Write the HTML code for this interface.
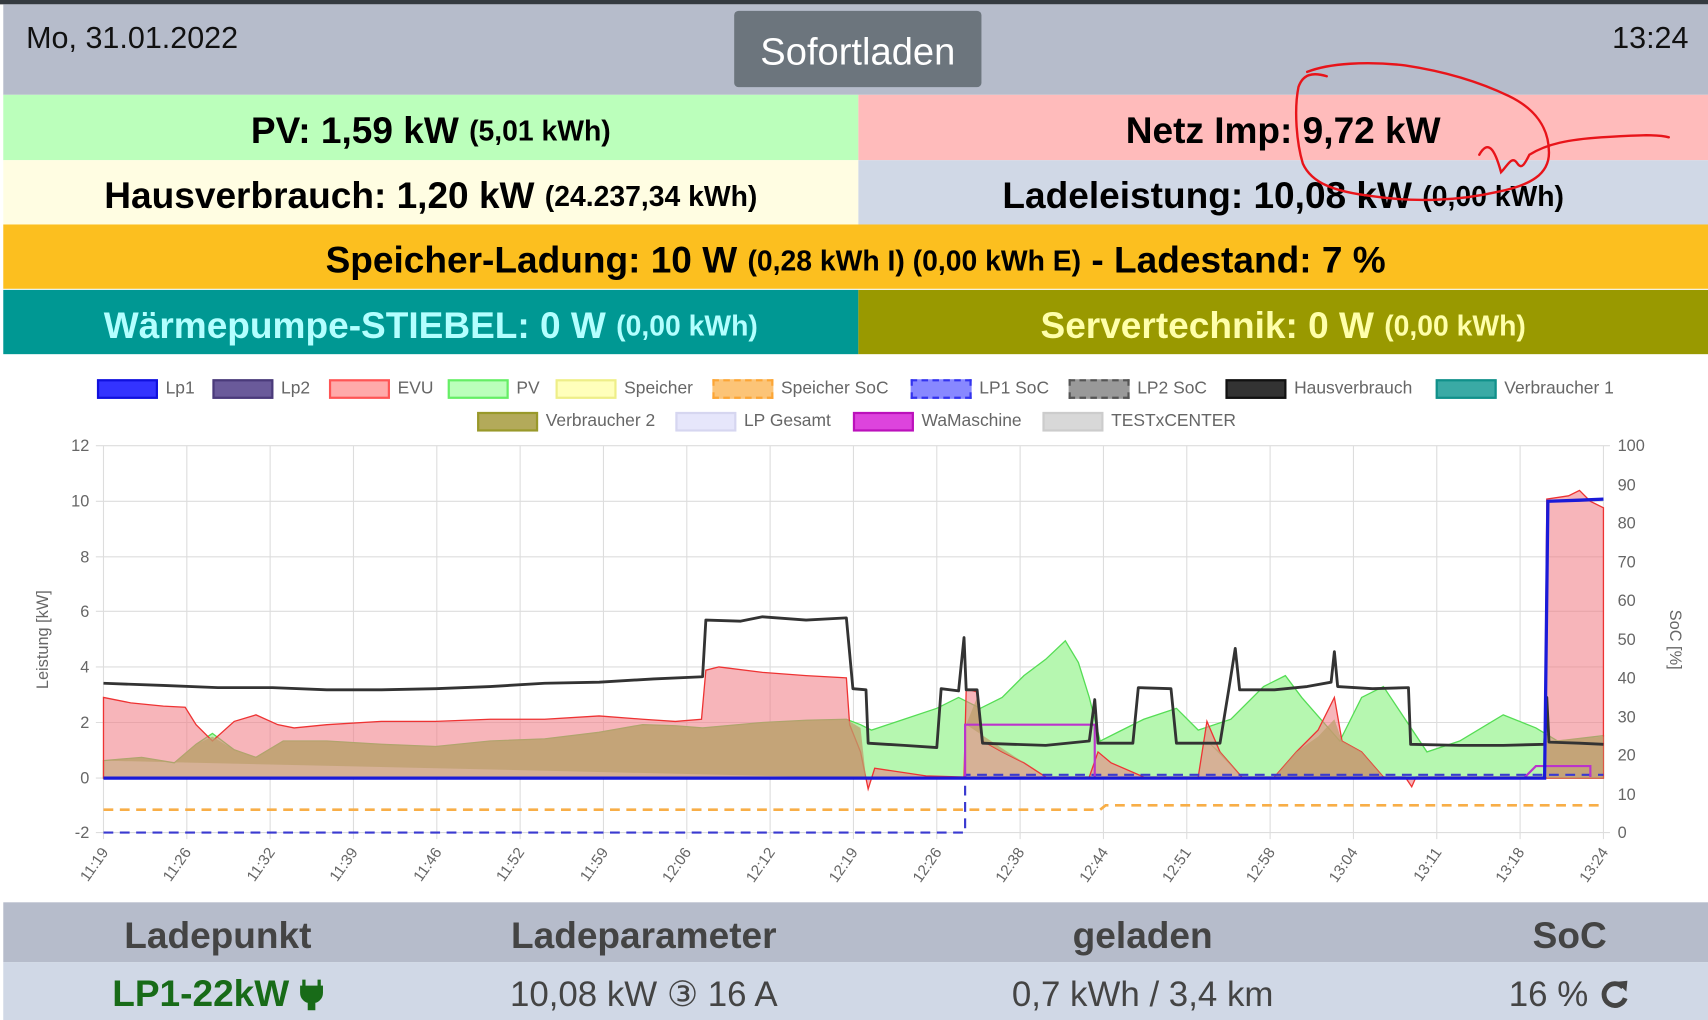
<!DOCTYPE html>
<html><head><meta charset="utf-8"><style>
*{margin:0;padding:0;box-sizing:border-box}
html,body{width:1708px;height:1020px;overflow:hidden;background:#fff}
#w{position:absolute;left:0;top:0;width:1568px;height:936px;transform-origin:0 0;transform:scale(1.08929,1.08974);font-family:"Liberation Sans",sans-serif}
.abs{position:absolute}
.row{position:absolute;display:flex;align-items:center;justify-content:center;font-weight:bold;font-size:34px;white-space:nowrap;padding-top:7px}
.row small{font-size:26px}
.lg{position:absolute;font-size:16px;color:#666}
.lg i{position:absolute;width:56px;height:18px;border:2px solid;top:0}
.lg span{position:absolute;top:0;white-space:nowrap}
.th{position:absolute;top:828px;height:55px;font-size:34px;font-weight:bold;color:#444;display:flex;align-items:center;justify-content:center;padding-top:7px}
.td{position:absolute;top:883px;height:53px;font-size:32px;color:#444;display:flex;align-items:center;justify-content:center;white-space:nowrap;padding-top:5px}
</style></head><body><div id="w">
<div class="abs" style="left:0;top:0;width:1568px;height:4px;background:#343a40"></div>
<div class="abs" style="left:3px;top:4px;width:1565px;height:83px;background:#b6bccb"></div>
<div class="abs" style="left:24px;top:19px;font-size:28px;color:#111">Mo, 31.01.2022</div>
<div class="abs" style="left:1480px;top:19px;font-size:28px;color:#111">13:24</div>
<div class="abs" style="left:674px;top:10px;width:227px;height:70px;background:#6c757d;border-radius:4px;color:#fff;font-size:35px;display:flex;align-items:center;justify-content:center;padding-top:5px">Sofortladen</div>

<div class="row" style="left:3px;top:87px;width:785px;height:60px;background:#bbffbb">PV: 1,59 kW&nbsp;<small>(5,01 kWh)</small></div>
<div class="row" style="left:788px;top:87px;width:780px;height:60px;background:#ffbbbb">Netz Imp: 9,72 kW</div>
<div class="row" style="left:3px;top:147px;width:785px;height:59px;background:#fffde2">Hausverbrauch: 1,20 kW&nbsp;<small>(24.237,34 kWh)</small></div>
<div class="row" style="left:788px;top:147px;width:780px;height:59px;background:#d0d8e6">Ladeleistung: 10,08 kW&nbsp;<small>(0,00 kWh)</small></div>
<div class="row" style="left:3px;top:206px;width:1565px;height:59px;background:#fcbf1f">Speicher-Ladung: 10 W&nbsp;<small>(0,28 kWh I) (0,00 kWh E)</small>&nbsp;- Ladestand: 7 %</div>
<div class="row" style="left:3px;top:266px;width:785px;height:59px;background:#009893;color:#b3ffff">Wärmepumpe-STIEBEL: 0 W&nbsp;<small>(0,00 kWh)</small></div>
<div class="row" style="left:788px;top:266px;width:780px;height:59px;background:#999900;color:#ffffaa">Servertechnik: 0 W&nbsp;<small>(0,00 kWh)</small></div>

<!-- red annotation -->
<svg class="abs" style="left:0;top:0" width="1568" height="330"><g fill="none" stroke="#e8141a" stroke-width="2.2" stroke-linecap="round">
<path d="M1218,70 C1205,66 1196,68 1192,80 C1188,100 1190,130 1196,150 C1204,168 1225,176 1260,180 C1300,186 1340,184 1375,176 C1405,170 1422,160 1422,140 C1422,118 1410,100 1385,88 C1360,76 1330,66 1290,60 C1255,56 1220,58 1200,66"/>
<path d="M1358,142 C1366,128 1372,136 1378,158 C1384,152 1388,142 1393,150 C1397,156 1400,150 1404,142 C1420,132 1440,128 1470,126 C1500,124 1522,123 1532,126"/>
</g></svg>

<!-- legend -->
<div class="lg" style="left:89px;top:348px"><i style="left:0;background:rgba(0,0,255,.8);border-color:#1010dd"></i><span style="left:63px">Lp1</span></div>
<div class="lg" style="left:195px;top:348px"><i style="left:0;background:#6a5a9a;border-color:#4a3a7a"></i><span style="left:63px">Lp2</span></div>
<div class="lg" style="left:302px;top:348px"><i style="left:0;background:#ffaaaa;border-color:#ff5555"></i><span style="left:63px">EVU</span></div>
<div class="lg" style="left:411px;top:348px"><i style="left:0;background:#bbffbb;border-color:#66ee66"></i><span style="left:63px">PV</span></div>
<div class="lg" style="left:510px;top:348px"><i style="left:0;background:#ffffbb;border-color:#eeee88"></i><span style="left:63px">Speicher</span></div>
<div class="lg" style="left:654px;top:348px"><i style="left:0;background:#fcc477;border-color:#fca535;border-style:dashed"></i><span style="left:63px">Speicher SoC</span></div>
<div class="lg" style="left:836px;top:348px"><i style="left:0;background:#8888ff;border-color:#3333ee;border-style:dashed"></i><span style="left:63px">LP1 SoC</span></div>
<div class="lg" style="left:981px;top:348px"><i style="left:0;background:#999;border-color:#555;border-style:dashed"></i><span style="left:63px">LP2 SoC</span></div>
<div class="lg" style="left:1125px;top:348px"><i style="left:0;background:#333;border-color:#111"></i><span style="left:63px">Hausverbrauch</span></div>
<div class="lg" style="left:1318px;top:348px"><i style="left:0;background:#3aaaa5;border-color:#11908a"></i><span style="left:63px">Verbraucher 1</span></div>
<div class="lg" style="left:438px;top:378px"><i style="left:0;background:#b3aa5a;border-color:#99992a"></i><span style="left:63px">Verbraucher 2</span></div>
<div class="lg" style="left:620px;top:378px"><i style="left:0;background:#e6e6fb;border-color:#d6d6f0"></i><span style="left:63px">LP Gesamt</span></div>
<div class="lg" style="left:783px;top:378px"><i style="left:0;background:#dd44dd;border-color:#bb11bb"></i><span style="left:63px">WaMaschine</span></div>
<div class="lg" style="left:957px;top:378px"><i style="left:0;background:#d8d8d8;border-color:#ccc"></i><span style="left:63px">TESTxCENTER</span></div>

<svg class="abs" style="left:0;top:400px" width="1568" height="430" viewBox="0 400 1568 430" font-family="Liberation Sans, sans-serif" font-size="15" fill="#666">
<g stroke="#ddd" stroke-width="1">
<line x1="88" y1="409" x2="1478" y2="409"/><line x1="88" y1="460" x2="1472" y2="460"/><line x1="88" y1="511" x2="1472" y2="511"/><line x1="88" y1="561" x2="1472" y2="561"/><line x1="88" y1="612" x2="1472" y2="612"/><line x1="88" y1="663" x2="1472" y2="663"/><line x1="88" y1="714" x2="1472" y2="714"/><line x1="88" y1="764" x2="1478" y2="764"/>
<path d="M95,409V770M171.5,409V770M248,409V770M324.5,409V770M401,409V770M477.5,409V770M554,409V770M630.5,409V770M707,409V770M783.5,409V770M860,409V770M936.5,409V770M1013,409V770M1089.5,409V770M1166,409V770M1242.5,409V770M1319,409V770M1395.5,409V770M1472,409V770"/>
</g>
<g text-anchor="end"><text x="82" y="414">12</text><text x="82" y="465">10</text><text x="82" y="516">8</text><text x="82" y="566">6</text><text x="82" y="617">4</text><text x="82" y="668">2</text><text x="82" y="719">0</text><text x="82" y="769">-2</text></g>
<g><text x="1485" y="414">100</text><text x="1485" y="450">90</text><text x="1485" y="485">80</text><text x="1485" y="521">70</text><text x="1485" y="556">60</text><text x="1485" y="592">50</text><text x="1485" y="627">40</text><text x="1485" y="663">30</text><text x="1485" y="698">20</text><text x="1485" y="734">10</text><text x="1485" y="769">0</text></g>
<text transform="translate(44,587) rotate(-90)" text-anchor="middle">Leistung [kW]</text>
<text transform="translate(1533,587) rotate(90)" text-anchor="middle">SoC [%]</text>
<g text-anchor="end" font-size="14">
<text transform="translate(100,782) rotate(-55)">11:19</text><text transform="translate(176,782) rotate(-55)">11:26</text><text transform="translate(253,782) rotate(-55)">11:32</text><text transform="translate(329,782) rotate(-55)">11:39</text><text transform="translate(406,782) rotate(-55)">11:46</text><text transform="translate(482,782) rotate(-55)">11:52</text><text transform="translate(559,782) rotate(-55)">11:59</text><text transform="translate(635,782) rotate(-55)">12:06</text><text transform="translate(712,782) rotate(-55)">12:12</text><text transform="translate(788,782) rotate(-55)">12:19</text><text transform="translate(865,782) rotate(-55)">12:26</text><text transform="translate(941,782) rotate(-55)">12:38</text><text transform="translate(1018,782) rotate(-55)">12:44</text><text transform="translate(1094,782) rotate(-55)">12:51</text><text transform="translate(1171,782) rotate(-55)">12:58</text><text transform="translate(1247,782) rotate(-55)">13:04</text><text transform="translate(1324,782) rotate(-55)">13:11</text><text transform="translate(1400,782) rotate(-55)">13:18</text><text transform="translate(1477,782) rotate(-55)">13:24</text>
</g>
<!-- PV area -->
<path d="M95,698 L130,695 160,700 180,683 195,673 215,688 235,695 260,680 300,680 350,683 400,685 450,680 500,678 550,672 590,665 620,666 645,668 700,663 740,661 777,660 790,665 800,670 830,660 860,650 880,640 900,650 920,640 940,620 960,605 978,588 990,608 1000,640 1010,680 1030,670 1050,660 1080,650 1100,670 1130,660 1160,630 1180,620 1195,640 1230,680 1250,640 1270,630 1290,660 1310,690 1340,680 1380,656 1410,668 1430,680 1472,675 L1472,714 L95,714Z" fill="#b6f7b0" stroke="#55dd55" stroke-width="1.2"/>
<!-- EVU area -->
<path d="M95,640 L120,645 150,648 170,649 180,665 195,680 215,662 235,656 255,665 270,668 300,665 350,662 400,662 450,660 500,660 550,657 590,660 620,662 644,660 648,615 660,612 700,617 740,620 777,622 780,665 790,690 797,724 803,705 850,712 885,713 887,632 897,635 902,680 920,690 940,700 960,713 1000,713 1008,690 1020,700 1050,713 1100,713 1108,662 1120,690 1140,713 1170,713 1190,690 1210,670 1225,640 1232,680 1250,690 1270,713 1290,713 1296,722 1300,713 1418,713 1420,458 1440,455 1450,450 1460,460 1472,466 L1472,714 L95,714Z" fill="rgba(240,120,130,0.55)" stroke="#ee3333" stroke-width="1.2"/>
<!-- brown overlap -->
<path d="M95,698 L130,695 160,700 180,683 195,676 215,688 235,695 260,680 300,680 350,683 400,685 450,680 500,678 550,672 590,665 620,666 645,668 700,663 740,661 777,660 790,668 795,714Z M887,665 L897,640 902,680 920,690 940,700 960,713Z M1108,680 1120,690 1140,713Z M1170,713 1190,690 1210,676 1225,660 1232,680 1250,690 1270,713Z M1420,680 L1472,676 1472,714 1420,714Z" fill="rgba(190,160,110,0.75)"/>
<!-- speicher soc -->
<path d="M95,743 H1010 L1015,739 H1472" stroke="#f8ae47" stroke-width="2.5" stroke-dasharray="9,6" fill="none"/>
<!-- lp1 soc -->
<path d="M95,764 H886 V711 H1472" stroke="#3a3ad0" stroke-width="2" stroke-dasharray="9,6" fill="none"/>
<!-- wamaschine -->
<path d="M886,713 V665 H1005 V713 M1400,713 L1410,703 H1460 V713" stroke="#bb33cc" stroke-width="2" fill="none"/>
<!-- hausverbrauch -->
<path d="M95,627 L150,629 200,631 250,631 300,633 350,633 400,632 450,630 500,627 550,626 600,623 645,621 648,569 680,570 700,566 740,569 777,567 783,632 795,633 797,682 830,684 860,686 864,632 880,634 885,585 887,633 897,633 902,682 930,683 960,684 1000,680 1005,642 1008,682 1040,682 1045,631 1075,632 1080,682 1120,682 1128,633 1134,595 1138,633 1170,633 1200,630 1222,626 1225,598 1228,630 1260,632 1293,631 1295,683 1340,684 1380,684 1418,683 1420,640 1422,681 1450,682 1472,683" stroke="#333" stroke-width="2.6" fill="none" stroke-linejoin="round"/>
<!-- lp1 -->
<path d="M95,714 H1418 L1421,460 L1450,459 1472,458" stroke="#1a1ad8" stroke-width="3" fill="none"/>
</svg>

<!-- table -->
<div class="abs" style="left:3px;top:828px;width:1565px;height:55px;background:#b6bccb"></div>
<div class="abs" style="left:3px;top:883px;width:1565px;height:53px;background:#d0d8e6"></div>
<div class="th" style="left:50px;width:300px">Ladepunkt</div>
<div class="th" style="left:441px;width:300px">Ladeparameter</div>
<div class="th" style="left:899px;width:300px">geladen</div>
<div class="th" style="left:1341px;width:200px">SoC</div>
<div class="td" style="left:50px;width:300px;color:#186b18;font-weight:bold;font-size:34px">LP1-22kW&nbsp;<svg width="22" height="30" viewBox="0 0 22 30"><path d="M4,2V8M18,2V8M2,9H20V14C20,19 16,22 13,22V29H9V22C6,22 2,19 2,14Z" fill="#186b18" stroke="#186b18" stroke-width="3"/></svg></div>
<div class="td" style="left:441px;width:300px">10,08 kW ③ 16 A</div>
<div class="td" style="left:899px;width:300px">0,7 kWh / 3,4 km</div>
<div class="td" style="left:1341px;width:200px">16 %&nbsp;<svg width="30" height="30" viewBox="0 0 30 30"><path d="M23,9A10,10 0 1 0 25,19" fill="none" stroke="#444" stroke-width="4.5"/><path d="M17,4L27,3L26,13Z" fill="#444"/></svg></div>
</div></body></html>
